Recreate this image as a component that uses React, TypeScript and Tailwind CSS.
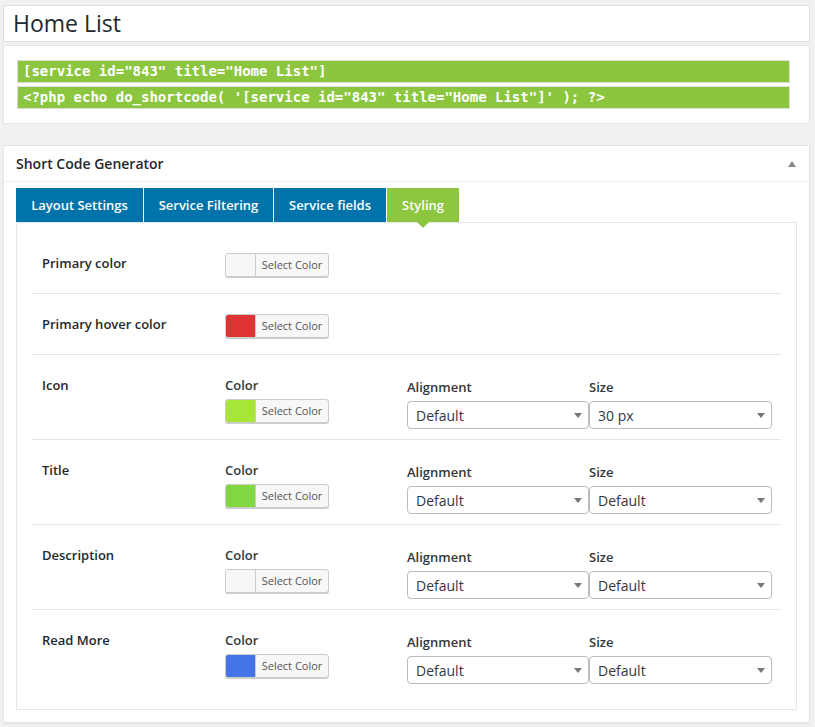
import React from "react";

const tabs = [
  { label: "Layout Settings", w: "w-[127px]" },
  { label: "Service Filtering", w: "w-[129px]" },
  { label: "Service fields", w: "w-[112px]" },
  { label: "Styling", w: "w-[72px]", active: true },
];

function ColorPicker({ color }: { color: string }) {
  return (
    <div className="flex h-[24px] w-[104px] overflow-hidden rounded-[3px] border border-[#cccccc] bg-[#f7f7f7] shadow-[0_1px_0_#cccccc]">
      <span className="w-[30px] border-r border-[#cccccc]" style={{ backgroundColor: color }} />
      <span className="flex flex-1 items-center justify-center text-[11px] text-[#555555]">Select Color</span>
    </div>
  );
}

function Select({ value, width }: { value: string; width: string }) {
  return (
    <div className={`flex h-[28px] ${width} items-center justify-between rounded-[4px] border border-[#bbbbbb] bg-white pl-2 pr-[6px] text-[14px] text-[#32373c]`}>
      <span>{value}</span>
      <span className="h-0 w-0 border-l-[4px] border-r-[4px] border-t-[5px] border-l-transparent border-r-transparent border-t-[#777777]" />
    </div>
  );
}

function SimpleRow({ label, color }: { label: string; color: string }) {
  return (
    <div className="flex border-b border-[#e5e5e5] pb-4 pl-[10px] pt-5">
      <div className="w-[183px] text-[13px] font-semibold leading-5 text-[#23282d]">{label}</div>
      <ColorPicker color={color} />
    </div>
  );
}

function FullRow({ label, color, size, last }: { label: string; color: string; size: string; last?: boolean }) {
  return (
    <div className={`flex pb-[10px] pl-[10px] pt-5 ${last ? "" : "border-b border-[#e5e5e5]"}`}>
      <div className="w-[183px] text-[13px] font-semibold leading-5 text-[#23282d]">{label}</div>
      <div className="w-[182px]">
        <div className="mb-1 text-[13px] font-semibold leading-5 text-[#32373c]">Color</div>
        <ColorPicker color={color} />
      </div>
      <div className="pt-[2px]">
        <div className="mb-1 text-[13px] font-semibold leading-5 text-[#32373c]">Alignment</div>
        <Select value="Default" width="w-[182px]" />
      </div>
      <div className="pt-[2px]">
        <div className="mb-1 text-[13px] font-semibold leading-5 text-[#32373c]">Size</div>
        <Select value={size} width="w-[183px]" />
      </div>
    </div>
  );
}

export default function App() {
  return (
    <div className="min-h-screen bg-[#f1f1f1] pb-2 pl-[3px] pr-[5px] pt-[5px] font-['Open_Sans',sans-serif]">
      <div className="flex h-[37px] items-center border border-[#dddddd] bg-white pl-[9px] text-[23px] leading-none text-[#23282d]">
        Home List
      </div>

      <div className="mt-[3px] flex flex-col gap-[3px] border border-[#e5e5e5] bg-white pb-[14px] pl-[13px] pr-[19px] pt-[14px]">
        {[
          '[service id="843" title="Home List"]',
          "<?php echo do_shortcode( '[service id=\"843\" title=\"Home List\"]' ); ?>",
        ].map((code) => (
          <div
            key={code}
            className="flex h-[23px] items-center whitespace-pre border border-[#dcdcdc] bg-[#8cc63f] pl-[5px] font-['DejaVu_Sans_Mono',monospace] text-[14px] font-bold text-white"
          >
            {code}
          </div>
        ))}
      </div>

      <div className="mt-[21px] border border-[#e5e5e5] bg-white shadow-[0_1px_1px_rgba(0,0,0,0.04)]">
        <div className="flex h-[36px] items-center justify-between border-b border-[#eeeeee] pl-3 pr-[13px]">
          <span className="text-[14px] font-semibold text-[#23282d]">Short Code Generator</span>
          <svg width="8" height="6" viewBox="0 0 8 6">
            <path d="M4 0 L8 6 L0 6 Z" fill="#82878c" />
          </svg>
        </div>

        <div className="px-3 pb-3 pt-[6px]">
          <div className="flex gap-px">
            {tabs.map((t) => (
              <div
                key={t.label}
                className={`relative flex h-[34px] ${t.w} items-center justify-center pt-[2px] text-[13px] font-semibold text-white ${
                  t.active ? "bg-[#8dc63f]" : "bg-[#0073aa]"
                }`}
              >
                {t.label}
                {t.active && (
                  <span className="absolute left-1/2 top-full z-10 h-0 w-0 -translate-x-1/2 border-l-[6px] border-r-[6px] border-t-[6px] border-l-transparent border-r-transparent border-t-[#8dc63f]" />
                )}
              </div>
            ))}
          </div>

          <div className="border border-[#e5e5e5] bg-white px-[15px] pb-[15px] pt-[10px]">
            <SimpleRow label="Primary color" color="#f7f7f7" />
            <SimpleRow label="Primary hover color" color="#dd3333" />
            <FullRow label="Icon" color="#a6e636" size="30 px" />
            <FullRow label="Title" color="#81d742" size="Default" />
            <FullRow label="Description" color="#f7f7f7" size="Default" />
            <FullRow label="Read More" color="#4573e8" size="Default" last />
          </div>
        </div>
      </div>
    </div>
  );
}
